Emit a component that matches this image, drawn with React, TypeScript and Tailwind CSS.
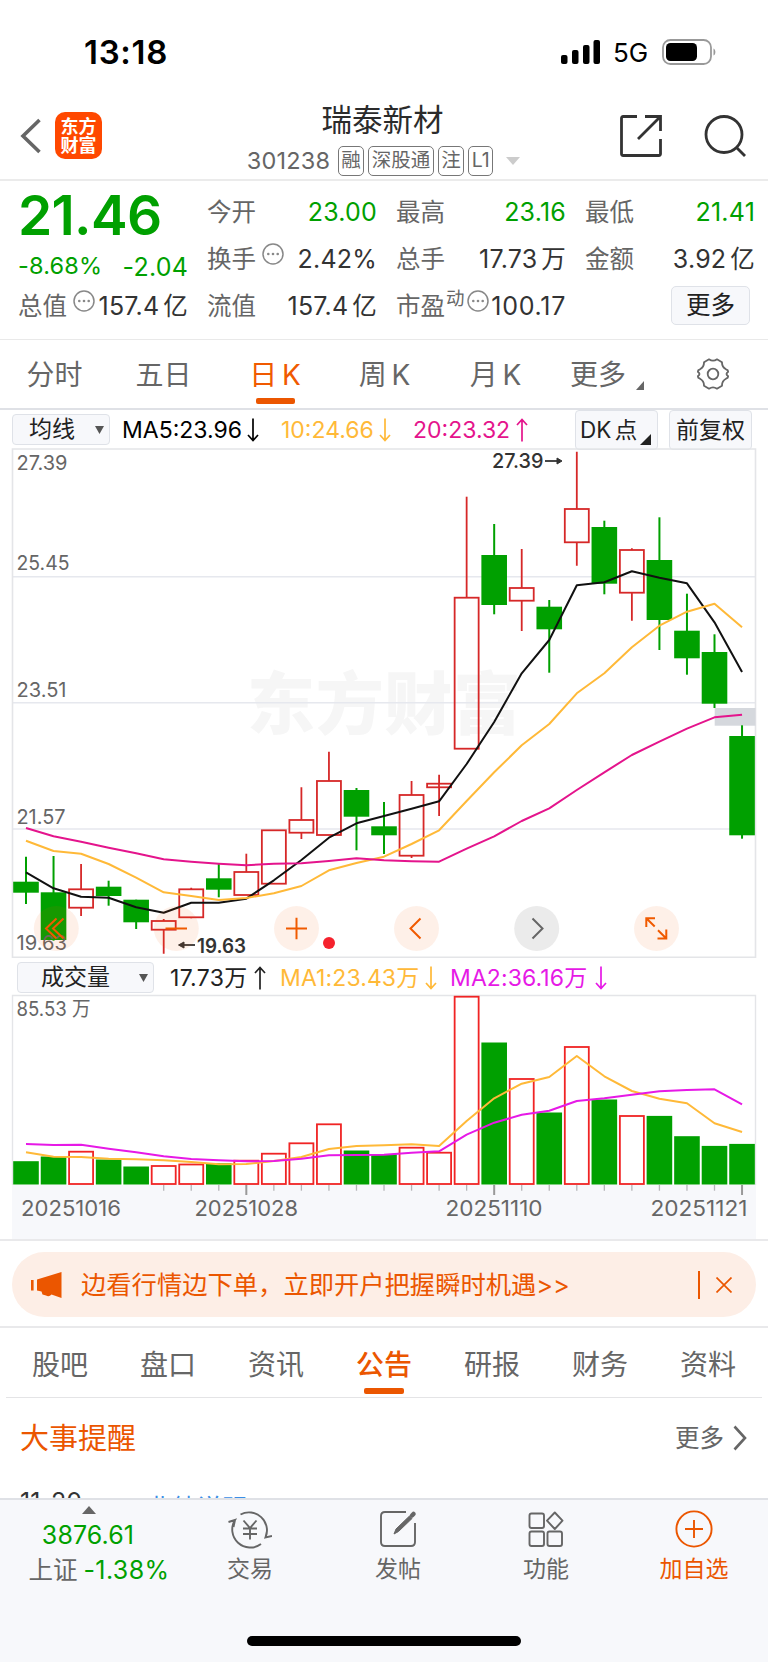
import type { ReactNode } from "react";

type Candle = {
  up: boolean;
  high: number;
  top: number;
  bottom: number;
  low: number;
  volume: number;
};

const FIRST_X = 26;
const STEP = 27.54;
const GREEN = "#00a000";
const RED = "#d62828";

// [up, high, top, bottom, low, volume top] in canvas units
const rows: [number, number, number, number, number, number][] = [
  [0, 856.7, 881.7, 892.7, 904, 1162],
  [0, 856, 892.3, 940, 940.7, 1157.3],
  [1, 864, 889.3, 907.7, 916, 1151.7],
  [0, 880.7, 886.7, 896, 905.7, 1160.3],
  [0, 899.7, 899.7, 922.3, 929, 1167.3],
  [1, 919, 921, 929.7, 953.7, 1166],
  [1, 887.7, 889.3, 917.3, 918.3, 1164.5],
  [0, 864, 878.3, 889.7, 897.3, 1164],
  [1, 853.7, 872, 895, 895, 1160.7],
  [1, 830.3, 830.3, 883.7, 883.7, 1153.7],
  [1, 787.3, 820, 832.7, 839, 1143.3],
  [1, 751.7, 781, 835, 835, 1124.3],
  [0, 788, 790, 816.7, 850.3, 1151.3],
  [0, 802, 826.3, 835.3, 854, 1155],
  [1, 781, 795, 855.7, 858, 1147.7],
  [1, 774.7, 783.7, 787.3, 816, 1152.7],
  [1, 496.7, 597.7, 748.7, 748.7, 996.7],
  [0, 524, 555, 605, 614.3, 1043.3],
  [1, 549, 588, 600.7, 631, 1079],
  [0, 600, 606.7, 629.3, 672.7, 1113.3],
  [1, 451.7, 509, 542.3, 565.7, 1047],
  [0, 520.7, 527, 583.7, 594.3, 1100.3],
  [1, 548.3, 550, 592.7, 620.7, 1116],
  [0, 517.3, 560, 620, 650, 1116.7],
  [0, 593.7, 630.7, 658.3, 674.7, 1137],
  [0, 634.3, 652, 703.7, 708, 1146.7],
  [0, 725.3, 736, 835.3, 838.7, 1144.7],
];

const candles: Candle[] = rows.map(([up, high, top, bottom, low, volume]) => ({
  up: up === 1,
  high,
  top,
  bottom,
  low,
  volume,
}));

const ma5 = [
  872.3, 888.3, 896.7, 897.7, 907.3, 912.7, 902.7, 902.7, 898.7, 880.3, 860, 837.7, 823.3, 816, 808.7, 801.3, 764, 722,
  673.3, 640, 585.3, 582.3, 571.3, 577.7, 583.3, 622.3, 672,
];
const ma10 = [
  840.7, 851, 853.7, 864, 877.7, 892.3, 896, 900, 898, 893.3, 886, 870.3, 863, 856.7, 844, 830.3, 801, 772.3, 745.3,
  724, 693.3, 673.3, 647.3, 625.7, 611.7, 603.7, 627.3,
];
const ma20 = [
  828, 836.3, 841.7, 847.7, 853.3, 859.3, 861.7, 863.7, 865.3, 863.7, 863.3, 861, 858.3, 860.3, 861.3, 861.7, 848.7,
  836.3, 821, 808.3, 790, 772.3, 755, 741.7, 728.7, 717.3, 714.7,
];
const volumeMa1 = [
  1152.3, 1156.7, 1157, 1158.7, 1159.3, 1160.3, 1162, 1164.3, 1164, 1161, 1157, 1149, 1146, 1145.3, 1144.3, 1146, 1121,
  1098.3, 1083.7, 1077, 1056, 1076.3, 1091, 1098.7, 1103.3, 1123.3, 1132,
];
const volumeMa2 = [
  1144, 1145, 1144.7, 1148.7, 1152.3, 1156.3, 1159, 1160.3, 1161.3, 1161, 1158.7, 1155.3, 1155, 1154.7, 1152.7, 1151.3,
  1134.7, 1122.7, 1114.7, 1110.7, 1101, 1098.3, 1094.7, 1091.3, 1090, 1089.3, 1104.3,
];

const xAt = (index: number) => FIRST_X + index * STEP;

function Line({ values, color }: { values: number[]; color: string }) {
  return (
    <polyline
      points={values.map((y, index) => `${xAt(index)},${y}`).join(" ")}
      fill="none"
      stroke={color}
      strokeWidth={2}
      strokeLinejoin="round"
    />
  );
}

type LabelProps = {
  x: number;
  y: number;
  width: number;
  size?: number;
  color?: string;
  weight?: number;
  children: string;
};

function Label({ x, y, width, size = 20, color = "#666666", weight = 400, children }: LabelProps) {
  return (
    <text x={x} y={y} fontSize={size} fill={color} fontWeight={weight} textLength={width} lengthAdjust="spacingAndGlyphs">
      {children}
    </text>
  );
}

function PriceChart() {
  return (
    <svg viewBox="0 448 768 512" className="block h-[512px] w-full">
      <text
        x={247}
        y={729}
        fontSize={68}
        fontWeight={800}
        fill="#f6f6f6"
        textLength={274}
        className="font-['Noto_Sans_CJK_SC',sans-serif]"
      >
        东方财富
      </text>
      <g stroke="#e6e8ee" strokeWidth={1.6}>
        <path d="M12 576.8H756M12 702.8H756M12 829H756" />
        <path d="M12.5 449H755.5V957.3H12.5Z" fill="none" stroke="#e4e5e8" />
      </g>
      <rect x={714.7} y={708} width={40.8} height={17.7} fill="#d5d8dd" />
      {candles.map((c, index) => {
        const x = xAt(index);

        return c.up ? (
          <g key={index} stroke={RED} strokeWidth={1.8} fill="none">
            <path d={`M${x} ${c.high}V${c.top}M${x} ${c.bottom}V${c.low}`} />
            <rect x={x - 12} y={c.top} width={24} height={c.bottom - c.top} />
          </g>
        ) : (
          <g key={index}>
            <path d={`M${x} ${c.high}V${c.low}`} stroke={GREEN} strokeWidth={2} />
            <rect x={x - 12.8} y={c.top} width={25.6} height={c.bottom - c.top} fill={GREEN} />
          </g>
        );
      })}
      <path d="M439 783V788" stroke={RED} strokeWidth={1.8} />
      <Line values={ma5} color="#111111" />
      <Line values={ma10} color="#ffb938" />
      <Line values={ma20} color="#e4148c" />

      <Label x={16.5} y={470.2} width={51}>27.39</Label>
      <Label x={16.5} y={570} width={53}>25.45</Label>
      <Label x={16.5} y={696.5} width={50}>23.51</Label>
      <Label x={16.5} y={823.5} width={49}>21.57</Label>
      <Label x={16.5} y={950} width={50.5}>19.63</Label>
      <Label x={492} y={468} width={51.5} color="#333333" weight={500}>27.39</Label>
      <Label x={197} y={952.5} width={49} color="#333333" weight={600}>19.63</Label>
      <g stroke="#333333" strokeWidth={1.8} fill="#333333">
        <path d="M545 461H560" />
        <path d="M557 458L562 461L557 464Z" strokeWidth={1} />
        <path d="M195 945H181" />
        <path d="M184 942L178.500 945L184 948Z" strokeWidth={1} />
      </g>

      {[56.3, 176.3, 296.5, 416.5, 656.5].map((cx) => (
        <circle key={cx} cx={cx} cy={928.5} r={22.5} fill="#f25a00" fillOpacity={0.09} />
      ))}
      <circle cx={536.7} cy={928.5} r={22.5} fill="#ebebeb" />
      <g stroke="#f05a00" strokeWidth={2} fill="none">
        <path d="M56.5 918.5L46 928.500L56.500 938.500M63.500 918.500L53 928.500L63.500 938.500" />
        <path d="M165.500 928.500H187" />
        <path d="M286 928.500H307M296.500 917.700V939.300" />
        <path d="M420.500 918.500L410.500 928.500L420.500 938.500" />
        <path d="M655 918.200H646.300V927M646.300 918.200L654.700 926.500M657.500 938.500H666.300V929.500M666.300 938.500L658 930.200" />
      </g>
      <path d="M532.500 918.500L542.500 928.500L532.500 938.500" stroke="#666666" strokeWidth={2} fill="none" />
      <circle cx={329} cy={943} r={6} fill="#f5222d" />
    </svg>
  );
}

function VolumeChart() {
  return (
    <svg viewBox="0 994 768 245" className="block h-[245px] w-full">
      <rect x={12} y={1185} width={744} height={54} fill="#f7f8fb" />
      <path d="M12.500 1185V995.500H755.500V1185" fill="none" stroke="#e4e5e8" strokeWidth={1.4} />
      {candles.map((c, index) => {
        const x = xAt(index);

        return c.up ? (
          <rect
            key={index}
            x={x - 12}
            y={c.volume}
            width={24}
            height={1184 - c.volume}
            fill="none"
            stroke="#f02424"
            strokeWidth={1.8}
          />
        ) : (
          <rect key={index} x={x - 12.8} y={c.volume - 0.8} width={25.6} height={1185.3 - c.volume} fill={GREEN} />
        );
      })}
      <Line values={volumeMa1} color="#ffb938" />
      <Line values={volumeMa2} color="#e619e6" />
      {candles.map((_, index) => {
        if (index < 5) {
          return null;
        }
        const major = index === 8 || index === 17 || index === 26;

        return (
          <path
            key={index}
            d={`M${xAt(index)} 1185V${major ? 1195 : 1190.7}`}
            stroke={major ? "#999999" : "#b5b5b8"}
            strokeWidth={major ? 2 : 1.3}
          />
        );
      })}
      <Label x={16.5} y={1016} width={74}>85.53 万</Label>
      <Label x={21} y={1216.3} width={100} size={21.500}>20251016</Label>
      <Label x={194.500} y={1216.3} width={103.500} size={21.500}>20251028</Label>
      <Label x={445.500} y={1216.3} width={97} size={21.500}>20251110</Label>
      <Label x={650.500} y={1216.3} width={97} size={21.500}>20251121</Label>
    </svg>
  );
}

function StatusBar() {
  return (
    <div className="flex h-[102px] items-center justify-between pt-0.5 pr-[52px] pl-[84px]">
      <span className="text-[33px] font-semibold leading-none tracking-[0.7px]">13:18</span>
      <div className="flex items-center">
        <svg viewBox="0 0 40 25" className="h-[25px] w-10">
          <rect x="0" y="15" width="6.500" height="9" rx="2" />
          <rect x="11" y="10" width="6.500" height="14" rx="2" />
          <rect x="22" y="5" width="6.500" height="19" rx="2" />
          <rect x="32.500" y="0" width="6.500" height="24" rx="2" />
        </svg>
        <span className="mt-0.5 ml-3 w-[38px] text-[26px] leading-none">5G</span>
        <svg viewBox="0 0 54 26" className="ml-[11px] h-[26px] w-[54px]">
          <rect x="1" y="1" width="48" height="24" rx="7.500" fill="none" stroke="#999999" strokeWidth="1.800" />
          <rect x="4" y="4" width="31" height="18" rx="4.500" />
          <path d="M51.500 9.500C54 10.500 54 15.500 51.500 16.500Z" fill="#999999" />
        </svg>
      </div>
    </div>
  );
}

function Tag({ children }: { children: ReactNode }) {
  return (
    <span className="flex h-[30px] items-center rounded-[5px] border-[1.5px] border-[#777777] px-[2.5px] text-[19.5px] leading-none">
      {children}
    </span>
  );
}

function Header() {
  return (
    <header className="flex h-[79px] items-start justify-between border-b-2 border-[#ebebeb] pr-[21px] pl-5">
      <div className="flex w-[225px] items-center pt-[10px]">
        <svg viewBox="0 0 22 36" className="h-9 w-[22px]" fill="none" stroke="#666666" strokeWidth="3.600">
          <path d="M19.500 2L3 18L19.500 34" />
        </svg>
        <div className="ml-[13px] flex h-[47px] w-[47px] flex-col items-center justify-center rounded-[10px] bg-[#ff4800] text-[18px] font-bold leading-[19px] text-white">
          <span>东方</span>
          <span>财富</span>
        </div>
      </div>
      <div className="-ml-[2px] flex flex-col items-center">
        <h1 className="h-[44px] pt-[1px] text-[30.5px] leading-[34px] text-[#2b2b2b]">瑞泰新材</h1>
        <div className="ml-0.5 flex items-center gap-1 text-[#666666]">
          <span className="mr-1 w-[83px] text-[23.5px] leading-none tracking-[0.2px]">301238</span>
          <Tag>融</Tag>
          <Tag>深股通</Tag>
          <Tag>注</Tag>
          <Tag>L1</Tag>
          <svg viewBox="0 0 14 8" className="ml-[9px] h-2 w-3.5" fill="#cccccc">
            <path d="M0 0H14L7 8Z" />
          </svg>
        </div>
      </div>
      <div className="flex w-[225px] justify-end pt-3">
        <svg viewBox="0 0 44 44" className="h-11 w-11" fill="none" stroke="#333333" strokeWidth="2.800">
          <path d="M18 2.500H4.200Q2.500 2.500 2.500 4.200V39.800Q2.500 41.500 4.200 41.500H39.800Q41.500 41.500 41.500 39.800V25M26 2.500H41.500V17M41 3L19 25" />
        </svg>
        <svg viewBox="0 0 44 44" className="ml-10 h-11 w-11" fill="none" stroke="#333333" strokeWidth="2.800">
          <circle cx="21" cy="20.500" r="18" />
          <path d="M33 33L42 42" />
        </svg>
      </div>
    </header>
  );
}

function Info() {
  return (
    <svg viewBox="0 0 22 22" className="mb-[11px] h-[22px] w-[22px] shrink-0" fill="#888888">
      <circle cx="11" cy="11" r="10" fill="none" stroke="#888888" strokeWidth="1.500" />
      <circle cx="6.300" cy="11" r="1.300" />
      <circle cx="11" cy="11" r="1.300" />
      <circle cx="15.700" cy="11" r="1.300" />
    </svg>
  );
}

type StatProps = {
  label: string;
  value: string;
  unit?: string;
  info?: boolean;
  mark?: string;
  green?: boolean;
};

function Stat({ label, value, unit, info, mark, green }: StatProps) {
  return (
    <div className="flex h-[47px] items-center whitespace-nowrap pt-0.5 text-[24.5px] leading-none">
      <span className="-ml-px text-[#666666]">{label}</span>
      {mark ? <span className="mb-4 ml-px text-[18.5px] text-[#666666]">{mark}</span> : null}
      {info ? <span className={mark ? "ml-[2px]" : "ml-[6px]"}><Info /></span> : null}
      <span
        className={`ml-auto text-[25px] ${mark ? "tracking-[0.7px]" : "tracking-[0.2px]"} ${green ? "text-[#00a000]" : "text-[#333333]"}`}
      >
        {value}
        {unit ? <span className="ml-1 text-[24.5px]">{unit}</span> : null}
      </span>
    </div>
  );
}

function Quote() {
  return (
    <section className="grid h-[159px] grid-cols-4 gap-x-5 border-b-[1.5px] border-[#e9e9e9] pt-[7px] pr-[13px] pl-[19px]">
      <div className="text-[#00a000]">
        <div className="-ml-px flex h-[54px] items-center text-[55px] font-semibold leading-none tracking-[-0.7px]">21.46</div>
        <div className="flex h-10 items-center justify-between pt-2 leading-none">
          <span className="-ml-px text-[23.5px] tracking-[0.2px]">-8.68%</span>
          <span className="pt-0.5 text-[25px] tracking-[0.2px]">-2.04</span>
        </div>
        <Stat label="总值" value="157.4" unit="亿" info />
      </div>
      <div>
        <Stat label="今开" value="23.00" green />
        <Stat label="换手" value="2.42%" info />
        <Stat label="流值" value="157.4" unit="亿" />
      </div>
      <div>
        <Stat label="最高" value="23.16" green />
        <Stat label="总手" value="17.73" unit="万" />
        <Stat label="市盈" value="100.17" mark="动" info />
      </div>
      <div>
        <Stat label="最低" value="21.41" green />
        <Stat label="金额" value="3.92" unit="亿" />
        <div className="flex h-[47px] items-center justify-end pr-[5px]">
          <button className="h-[39px] w-[79px] rounded-[5px] border-[1.5px] border-[#dfe2e8] bg-[#f7f8fb] text-[24.5px] leading-none text-[#222222]">
            更多
          </button>
        </div>
      </div>
    </section>
  );
}

function PeriodTabs() {
  const periods = [
    { label: "分时", width: "w-[109px]" },
    { label: "五日", width: "w-[109px]" },
    { label: "日 K", width: "w-[114px]" },
    { label: "周 K", width: "w-[105px]" },
    { label: "月 K", width: "w-[117px]" },
  ];

  return (
    <nav className="flex h-[70px] items-start border-b-2 border-[#dfe1e6] text-[28px] leading-none text-[#666666]">
      {periods.map((period) => {
        const isActive = period.label === "日 K";

        return (
          <button key={period.label} className={`flex h-16 flex-col items-center ${period.width} ${isActive ? "text-[#f05a00]" : ""}`}>
            <span className="flex h-[58px] items-center pt-3 [word-spacing:-3px] whitespace-nowrap">{period.label}</span>
            {isActive ? <span className="h-1.5 w-[39px] rounded-[2px] bg-[#eb5600]" /> : null}
          </button>
        );
      })}
      <button className="ml-4 flex h-[58px] items-center pt-3">
        更多
        <svg viewBox="0 0 8 9" className="mt-5 ml-[10px] h-[9px] w-2" fill="#666666">
          <path d="M8 0V9H0Z" />
        </svg>
      </button>
      <svg viewBox="0 0 32 32" className="mt-[18px] ml-[53px] h-8 w-8" fill="none" stroke="#666666" strokeWidth="1.800">
        <path
          strokeLinejoin="round"
          d="M12 1.300Q16 4 20 1.300L25 4.200Q24.800 9 29 11.300Q31.500 12 31 14Q28 16 31 18Q31.500 20 29 20.700Q24.800 23 25 27.800L20 30.700Q16 28 12 30.700L7 27.800Q7.200 23 3 20.700Q.5 20 1 18Q4 16 1 14Q.5 12 3 11.300Q7.200 9 7 4.200Z"
        />
        <circle cx="16" cy="16" r="5.300" />
      </svg>
    </nav>
  );
}

function Arrow({ up = false }: { up?: boolean }) {
  return (
    <svg viewBox="0 0 12 24" className="h-6 w-3 shrink-0" fill="none" stroke="currentColor" strokeWidth="1.700">
      <path d={up ? "M6 23.500V1.500M1 7L6 1.500L11 7" : "M6 .5V22.500M1 17L6 22.500L11 17"} />
    </svg>
  );
}

function Caret() {
  return (
    <svg viewBox="0 0 9 8" className="h-2 w-[9px]" fill="#555555">
      <path d="M0 0H9L4.500 8Z" />
    </svg>
  );
}

function MaBar() {
  return (
    <div className="flex h-[38px] items-start pl-3 text-[23px] leading-none whitespace-nowrap">
      <button className="mt-1 flex h-[31px] w-[98px] items-center justify-between rounded-[4px] border-[1.5px] border-[#dfe2e8] bg-[#f7f8fb] pr-[5px] pl-[16px] text-[23px] text-[#222222]">
        均线
        <Caret />
      </button>
      <div className="ml-[12px] flex h-10 w-[159px] items-center text-black">
        <span className="w-[125px]">MA5:23.96</span>
        <Arrow />
      </div>
      <div className="flex h-10 w-[132px] items-center text-[#ffb938]">
        <span className="w-[98px]">10:24.66</span>
        <Arrow />
      </div>
      <div className="flex h-10 w-[162px] items-center text-[#e4148c]">
        <span className="w-[103px]">20:23.32</span>
        <Arrow up />
      </div>
      <button className="flex h-10 w-[83px] items-center rounded-[4px] border-[1.5px] border-[#dfe2e8] bg-[#f7f8fb] pl-1 text-[22.5px] text-[#222222]">
        <span className="w-[60px] text-left [word-spacing:-3px]">DK 点</span>
        <svg viewBox="0 0 11 11" className="mt-[18px] h-[11px] w-[11px]" fill="#222222">
          <path d="M11 0V11H0Z" />
        </svg>
      </button>
      <button className="ml-[11px] h-10 w-[83px] rounded-[4px] border-[1.5px] border-[#dfe2e8] bg-[#f7f8fb] text-[23px] text-[#222222]">
        前复权
      </button>
    </div>
  );
}

function VolumeBar() {
  return (
    <div className="flex h-[34px] items-start pl-[17px] text-[23px] leading-none whitespace-nowrap">
      <button className="mt-0.5 flex h-[31px] w-[137px] items-center justify-between rounded-[4px] border-[1.5px] border-[#dfe2e8] bg-[#f7f8fb] pr-[5px] pl-[23px] text-[23px] text-[#222222]">
        成交量
        <Caret />
      </button>
      <div className="ml-[16px] flex h-9 w-[110px] items-center text-[#222222]">
        <span className="w-[84px] tracking-[0.3px]">17.73万</span>
        <Arrow up />
      </div>
      <div className="flex h-9 w-[170px] items-center text-[#ffb938]">
        <span className="w-[145px] tracking-[0.1px]">MA1:23.43万</span>
        <Arrow />
      </div>
      <div className="flex h-9 items-center text-[#e619e6]">
        <span className="w-[145px] tracking-[0.1px]">MA2:36.16万</span>
        <Arrow />
      </div>
    </div>
  );
}

function Banner() {
  return (
    <div className="h-[89px] border-y-2 border-[#e9e9eb] px-3 pt-[11px]">
      <div className="flex h-[65px] items-center rounded-full bg-[#fdeee6] pl-[19px] text-[#eb5600]">
        <svg viewBox="0 0 32 28" className="h-7 w-8" fill="currentColor">
          <path d="M0 9H2.600V19.500H0ZM6 8.500L30.500 1V27L20.500 23.500Q18 26.500 15 24.500L11.500 23.500L10.500 20.500L6 19.500Z" />
        </svg>
        <span className="ml-[18px] pt-px text-[25.3px] leading-none whitespace-nowrap">边看行情边下单，立即开户把握瞬时机遇&gt;&gt;</span>
        <span className="ml-auto h-7 w-[1.5px] bg-[#eb5600]" />
        <svg viewBox="0 0 16 16" className="mr-[24.5px] ml-4 h-4 w-4" stroke="currentColor" strokeWidth="1.700">
          <path d="M.5 .5L15.500 15.500M15.500 .5L.5 15.500" />
        </svg>
      </div>
    </div>
  );
}

function SectionTabs() {
  const tabs = ["股吧", "盘口", "资讯", "公告", "研报", "财务", "资料"];

  return (
    <nav className="mx-1.5 grid h-[70px] grid-cols-7 border-b-[1.5px] border-[#e4e4e6] text-[28px] leading-none text-[#666666]">
      {tabs.map((tab) => {
        const isActive = tab === "公告";

        return (
          <button key={tab} className={`flex flex-col items-center ${isActive ? "font-medium text-[#eb5600]" : ""}`}>
            <span className="flex h-[60px] items-center pt-[13px]">{tab}</span>
            {isActive ? <span className="h-1.5 w-10 rounded-[2px] bg-[#eb5600]" /> : null}
          </button>
        );
      })}
    </nav>
  );
}

function Reminders() {
  return (
    <section className="h-[100px] overflow-hidden pr-[21px] pl-5">
      <div className="flex h-[79px] items-center justify-between pt-px">
        <h2 className="text-[29px] leading-none text-[#eb5600]">大事提醒</h2>
        <div className="flex items-center text-[24.5px] leading-none text-[#666666]">
          更多
          <svg viewBox="0 0 14 26" className="ml-[9px] h-[26px] w-3.5" fill="none" stroke="#666666" strokeWidth="2.600">
            <path d="M1.500 1.500L12 13L1.500 24.500" />
          </svg>
        </div>
      </div>
      <div className="flex items-start pt-[13px] text-[25px] leading-none whitespace-nowrap text-[#333333]">
        <span className="w-[127px]">11-20</span>
        <span className="pt-[6px] text-[#3a8ee6]">业绩说明</span>
      </div>
    </section>
  );
}

function NavItem({ label, active, children }: { label: string; active?: boolean; children: ReactNode }) {
  return (
    <button className={`flex w-[148px] flex-col items-center ${active ? "text-[#eb5600]" : "text-[#666666]"}`}>
      <svg viewBox="0 0 44 40" className="mt-[9px] h-10 w-11" fill="none" stroke="currentColor" strokeWidth="1.900">
        {children}
      </svg>
      <span className="mt-[9px] text-[23px] leading-none">{label}</span>
    </button>
  );
}

function BottomBar() {
  return (
    <footer className="h-[164px] border-t-2 border-[#dfe1e6] bg-[#f7f8fb]">
      <div className="flex h-[85px]">
        <div className="flex w-[176px] flex-col items-center text-[24.5px] leading-none">
          <svg viewBox="0 0 14 8" className="mt-[6px] ml-px h-2 w-3.5" fill="#666666">
            <path d="M7 0L14 8H0Z" />
          </svg>
          <span className="mt-[9px] text-[25px] tracking-[0.1px] text-[#00a000]">3876.61</span>
          <span className="mt-[10px] ml-[22px] flex items-center gap-1.5 whitespace-nowrap text-[#666666]">
            上证 <span className="text-[25px] tracking-[0.4px] text-[#00a000]">-1.38%</span>
          </span>
        </div>
        <NavItem label="交易">
          <path d="M12.500 5.500A18 18 0 0 1 37.500 28.500L44 27M37.500 28.500L39 22M33 35A18 18 0 0 1 7 11L.5 13M7 11L5.500 18" />
          <path d="M15.500 11.500L22 19L28.500 11.500M22 19V30.500M15 19.500H29M15 25H29" />
        </NavItem>
        <NavItem label="发帖">
          <path d="M30 3H9Q5 3 5 7V33Q5 37 9 37H35Q39 37 39 33V14" />
          <path d="M18 25L20 20L33.500 7L36 9.500L22.500 22.500Z" fill="currentColor" strokeWidth="1" />
          <path d="M36 6.500L37.500 5" strokeWidth="4.500" strokeLinecap="round" />
        </NavItem>
        <NavItem label="功能">
          <rect x="5.500" y="4.500" width="14.500" height="14.500" rx="2" />
          <rect x="5.500" y="22.500" width="14.500" height="14.500" rx="2" />
          <rect x="23.500" y="22.500" width="14.500" height="14.500" rx="2" />
          <path d="M30.800 3.500L38.500 11.700L30.800 20L23 11.700Z" strokeLinejoin="round" />
        </NavItem>
        <NavItem label="加自选" active>
          <circle cx="22" cy="20" r="17.600" />
          <path d="M22 11V29M13 20H31" />
        </NavItem>
      </div>
      <div className="mx-auto mt-[51px] h-2.5 w-[274px] rounded-full bg-black" />
    </footer>
  );
}

export default function App() {
  return (
    <main className="h-[1663px] w-[768px] overflow-hidden bg-white font-['Inter','Noto_Sans_CJK_SC',sans-serif] text-black">
      <StatusBar />
      <Header />
      <Quote />
      <PeriodTabs />
      <MaBar />
      <PriceChart />
      <VolumeBar />
      <VolumeChart />
      <Banner />
      <SectionTabs />
      <Reminders />
      <BottomBar />
    </main>
  );
}
